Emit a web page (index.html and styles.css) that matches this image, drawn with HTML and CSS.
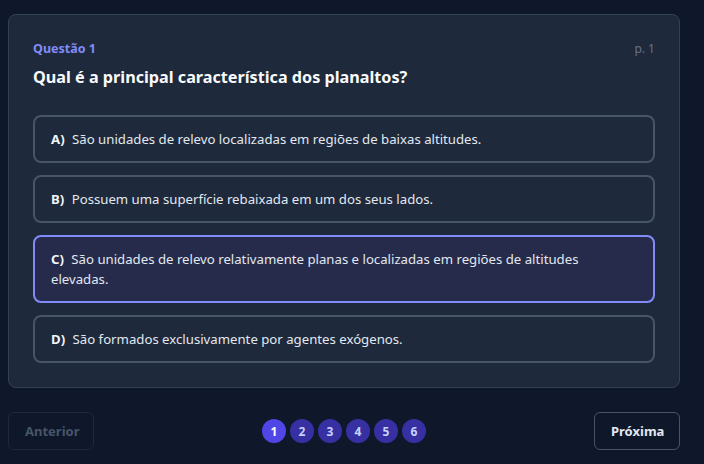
FILE: index.html
```html
<!DOCTYPE html>
<html lang="pt-BR">
<head>
<meta charset="UTF-8" />
<meta name="viewport" content="width=device-width, initial-scale=1.0" />
<title>Questionário</title>
<link rel="stylesheet" href="styles.css">
</head>
<body>

<div class="quiz">
  <div class="card">
    <div class="card-head">
      <span class="q-label">Questão 1</span>
      <span class="q-page">p. 1</span>
    </div>
    <h2 class="q-title">Qual é a principal característica dos planaltos?</h2>

    <div class="options">
      <div class="option"><b>A)</b> São unidades de relevo localizadas em regiões de baixas altitudes.</div>
      <div class="option"><b>B)</b> Possuem uma superfície rebaixada em um dos seus lados.</div>
      <div class="option selected"><b>C)</b> São unidades de relevo relativamente planas e localizadas em regiões de altitudes elevadas.</div>
      <div class="option"><b>D)</b> São formados exclusivamente por agentes exógenos.</div>
    </div>
  </div>

  <div class="footer">
    <button class="btn" disabled>Anterior</button>
    <div class="pages">
      <span class="dot current">1</span>
      <span class="dot">2</span>
      <span class="dot">3</span>
      <span class="dot">4</span>
      <span class="dot">5</span>
      <span class="dot">6</span>
    </div>
    <button class="btn">Próxima</button>
  </div>
</div>

</body>
</html>
```

FILE: styles.css
```css
body { font-family: "Noto Sans", Arial, sans-serif; background-color: #0f172a; margin: 0; color: #e2e8f0; }
.quiz { width: 672px; margin: 14px 0 0 8px; }
.card {
  background-color: #1e293b; border: 1px solid #334155; border-radius: 8px; padding: 24px;
}
.card-head { display: flex; justify-content: space-between; align-items: center; height: 18px; }
.q-label { font-size: 12.5px; font-weight: bold; color: #818cf8; }
.q-page { font-size: 12px; color: #64748b; }
.q-title { margin: 8px 0 26px; font-size: 16.2px; line-height: 24px; color: #f8fafc; }
.options { display: flex; flex-direction: column; gap: 12px; }
.option {
  border: 2px solid #475569; border-radius: 8px; padding: 12px 16px; font-size: 13.2px; line-height: 20px; color: #e2e8f0;
}
.option b { color: #f1f5f9; margin-right: 4px; }
.option.selected { border-color: #818cf8; background-color: #262b4b; }
.footer { display: flex; justify-content: space-between; align-items: center; margin-top: 24px; }
.btn {
  font-family: inherit; font-size: 13px; font-weight: bold; padding: 0 16px; height: 38px; width: 86px;
  background: none; border: 1px solid #475569; border-radius: 6px; color: #e2e8f0; cursor: pointer;
}
.btn:disabled { border-color: #1e293b; color: #475569; cursor: default; }
.pages { display: flex; gap: 4px; }
.dot {
  width: 24px; height: 24px; border-radius: 50%; background-color: #3730a3; color: #c7d2fe;
  font-size: 12px; font-weight: bold; display: flex; align-items: center; justify-content: center;
}
.dot.current { background-color: #4f46e5; color: #fff; }
```
